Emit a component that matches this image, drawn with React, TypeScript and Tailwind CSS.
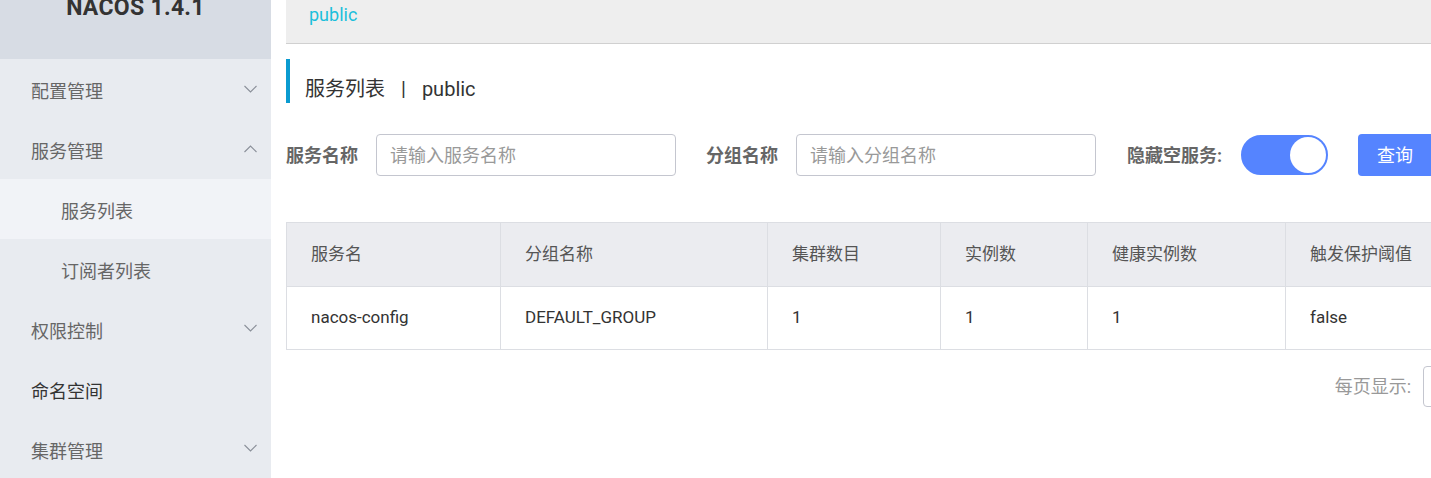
import React from "react";

const F = "font-['Roboto','Noto_Sans_CJK_SC',sans-serif]";

function Chevron({ up }: { up?: boolean }) {
  return (
    <svg width="13" height="8" viewBox="0 0 13 8" className="text-[#8a8f99]">
      {up ? (
        <polyline points="0.5,7 6.5,1 12.5,7" fill="none" stroke="currentColor" strokeWidth="1.1" />
      ) : (
        <polyline points="0.5,1 6.5,7 12.5,1" fill="none" stroke="currentColor" strokeWidth="1.1" />
      )}
    </svg>
  );
}

function MenuItem({ label, chevron, sub, active, dark }: { label: string; chevron?: "up" | "down"; sub?: boolean; active?: boolean; dark?: boolean }) {
  return (
    <div
      className={`h-[60px] flex items-center justify-between pr-[14px] ${sub ? "pl-[61px]" : "pl-[31px]"} ${active ? "bg-[#f1f3f7]" : ""}`}
    >
      <span className={`mt-[6px] text-[18px] ${dark ? "text-[#333]" : "text-[#666]"}`}>{label}</span>
      {chevron && <Chevron up={chevron === "up"} />}
    </div>
  );
}

const cols = [213, 267, 173, 147, 198, 219];

function Row({ cells, header }: { cells: string[]; header?: boolean }) {
  return (
    <div className={`flex h-[63px] ${header ? "bg-[#ebecf0]" : "bg-white border-t border-[#dcdee3]"}`}>
      {cells.map((c, i) => (
        <div
          key={i}
          style={{ width: cols[i] }}
          className={`shrink-0 flex items-center pl-[24px] text-[17px] ${header ? "text-[#555]" : "text-[#333]"} ${i > 0 ? "border-l border-[#dcdee3]" : ""}`}
        >
          {c}
        </div>
      ))}
    </div>
  );
}

export default function App() {
  return (
    <div className={`flex h-[478px] w-[1431px] overflow-hidden bg-white ${F}`}>
      <div className="w-[271px] shrink-0 bg-[#e8ebf0] flex flex-col">
        <div className="h-[59px] bg-[#d7dce4] flex justify-center">
          <span className="mt-[-7px] text-[23px] leading-[30px] font-bold text-[#333] tracking-[0.3px]">NACOS 1.4.1</span>
        </div>
        <MenuItem label="配置管理" chevron="down" />
        <MenuItem label="服务管理" chevron="up" />
        <MenuItem label="服务列表" sub active />
        <MenuItem label="订阅者列表" sub />
        <MenuItem label="权限控制" chevron="down" />
        <MenuItem label="命名空间" dark />
        <MenuItem label="集群管理" chevron="down" />
      </div>
      <div className="ml-[15px] w-[1217px] shrink-0 flex flex-col">
        <div className="h-[44px] bg-[#eeeeee] border-b border-[#d0d0d0] pl-[23px] pt-[1px]">
          <span className="text-[18px] text-[#1bbfdb]">public</span>
        </div>
        <div className="mt-[15px] h-[44px] border-l-4 border-[#0a9bd0] pl-[15px] pt-[16px]">
          <span className="text-[20px] text-[#333] leading-[28px]">
            服务列表<span className="mx-[16px]">|</span>public
          </span>
        </div>
        <div className="mt-[31px] flex items-center h-[42px]">
          <span className="text-[18px] font-bold text-[#666] w-[90px]">服务名称</span>
          <div className="w-[300px] h-[42px] rounded-[4px] border border-[#c4c6cf] flex items-center pl-[13px] text-[18px] text-[#999]">
            请输入服务名称
          </div>
          <span className="ml-[30px] text-[18px] font-bold text-[#666] w-[90px]">分组名称</span>
          <div className="w-[300px] h-[42px] rounded-[4px] border border-[#c4c6cf] flex items-center pl-[13px] text-[18px] text-[#999]">
            请输入分组名称
          </div>
          <span className="ml-[31px] text-[18px] font-bold text-[#666]">隐藏空服务:</span>
          <div className="ml-[19px] w-[87px] h-[40px] rounded-full bg-[#5584ff] border-2 border-[#5584ff] flex justify-end items-center">
            <div className="w-[36px] h-[36px] rounded-full bg-white" />
          </div>
          <div className="ml-[30px] w-[80px] h-[42px] rounded-[4px] bg-[#5584ff] flex items-center pl-[19px] text-[18px] text-white">
            查询
          </div>
        </div>
        <div className="mt-[46px] border border-[#dcdee3] w-[1218px]">
          <Row header cells={["服务名", "分组名称", "集群数目", "实例数", "健康实例数", "触发保护阈值"]} />
          <Row cells={["nacos-config", "DEFAULT_GROUP", "1", "1", "1", "false"]} />
        </div>
        <div className="mt-[16px] flex justify-end items-center">
          <span className="text-[18px] text-[#999]">每页显示:</span>
          <div className="ml-[12px] w-[80px] h-[41px] rounded-[4px] border border-[#c4c6cf]" />
        </div>
      </div>
    </div>
  );
}
